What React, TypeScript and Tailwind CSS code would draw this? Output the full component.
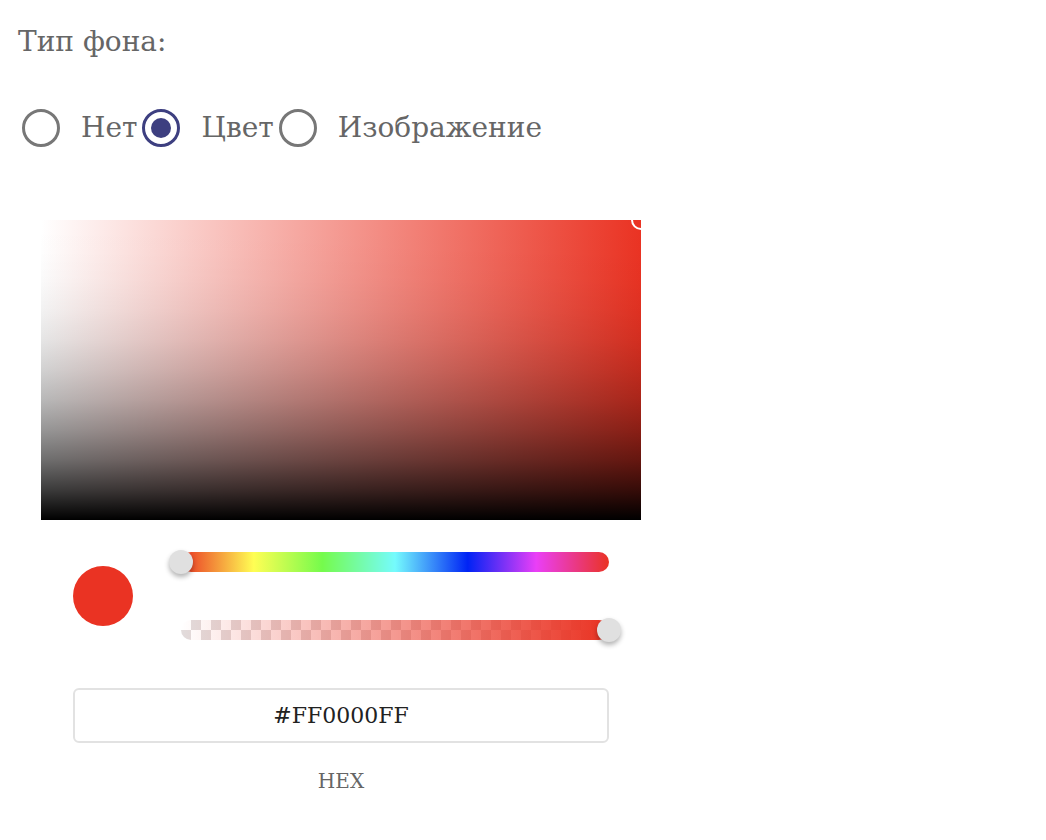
import React from "react";

function Radio({ checked }: { checked?: boolean }) {
  return (
    <span
      className={
        "flex h-[38px] w-[38px] shrink-0 items-center justify-center rounded-full border-[3px] " +
        (checked ? "border-[#3d3f80]" : "border-[#777777]")
      }
    >
      {checked && <span className="h-[20px] w-[20px] rounded-full bg-[#3d3f80]" />}
    </span>
  );
}

export default function App() {
  const items = [
    { label: "Нет", checked: false },
    { label: "Цвет", checked: true },
    { label: "Изображение", checked: false },
  ];
  return (
    <div
      className="min-h-screen bg-white pl-[18px] pt-[26px]"
      style={{ fontFamily: '"DejaVu Serif", "Liberation Serif", serif' }}
    >
      <div className="text-[28px] leading-[32px] text-[#666666]">Тип фона:</div>

      <div className="ml-[4px] mt-[51px] flex h-[38px] items-center">
        {items.map((it, i) => (
          <div key={it.label} className={"flex items-center " + (i > 0 ? "ml-[5px]" : "")}>
            <Radio checked={it.checked} />
            <span className="ml-[21px] text-[28px] leading-[32px] text-[#666666]">{it.label}</span>
          </div>
        ))}
      </div>

      <div className="ml-[23px] mt-[73px] w-[600px]">
        <div className="relative h-[300px] overflow-hidden bg-[linear-gradient(to_right,#ffffff,#ea3323)]">
          <div className="absolute inset-0 bg-[linear-gradient(to_top,rgba(0,0,0,1)_0%,rgba(0,0,0,0.77)_10%,rgba(0,0,0,0.57)_20%,rgba(0,0,0,0.41)_30%,rgba(0,0,0,0.28)_40%,rgba(0,0,0,0.18)_50%,rgba(0,0,0,0.1)_60%,rgba(0,0,0,0.05)_70%,rgba(0,0,0,0.018)_80%,rgba(0,0,0,0.003)_90%,rgba(0,0,0,0)_100%)]" />
          <div className="absolute right-[-10px] top-[-10px] h-[20px] w-[20px] rounded-full border-2 border-white bg-[#ea3323]" />
        </div>

        <div className="px-8">
          <div className="mt-8 flex items-center gap-12">
            <div className="h-[60px] w-[60px] shrink-0 rounded-full bg-[#ea3323]" />
            <div className="flex flex-1 flex-col gap-12">
              <div className="relative h-5 rounded-full bg-[linear-gradient(to_right,#ea3323_0%,#fffe54_17%,#75fb4c_33%,#75fbfd_50%,#0023f5_67%,#ea3ff7_83%,#ea3323_100%)]">
                <div className="absolute left-0 top-1/2 h-6 w-6 -translate-x-1/2 -translate-y-1/2 rounded-full bg-[#e0e0e0] shadow-[0_3px_5px_rgba(0,0,0,0.3)]" />
              </div>
              <div className="relative h-5">
                <div className="absolute inset-0 overflow-hidden rounded-full bg-[conic-gradient(#e2dcdc_25%,#ffffff_0_50%,#e2dcdc_0_75%,#ffffff_0)] bg-[length:20px_20px]">
                  <div className="absolute inset-0 bg-[linear-gradient(to_right,rgba(234,51,35,0),#ea3323)]" />
                </div>
                <div className="absolute left-full top-1/2 h-6 w-6 -translate-x-1/2 -translate-y-1/2 rounded-full bg-[#e0e0e0] shadow-[0_3px_5px_rgba(0,0,0,0.3)]" />
              </div>
            </div>
          </div>

          <div className="mt-12 flex h-[55px] items-center justify-center rounded-md border-2 border-[#e2e2e2] text-[22px] text-[#222222]">
            #FF0000FF
          </div>
          <div className="mt-[26px] text-center text-[20px] leading-[24px] text-[#666666]">HEX</div>
        </div>
      </div>
    </div>
  );
}
